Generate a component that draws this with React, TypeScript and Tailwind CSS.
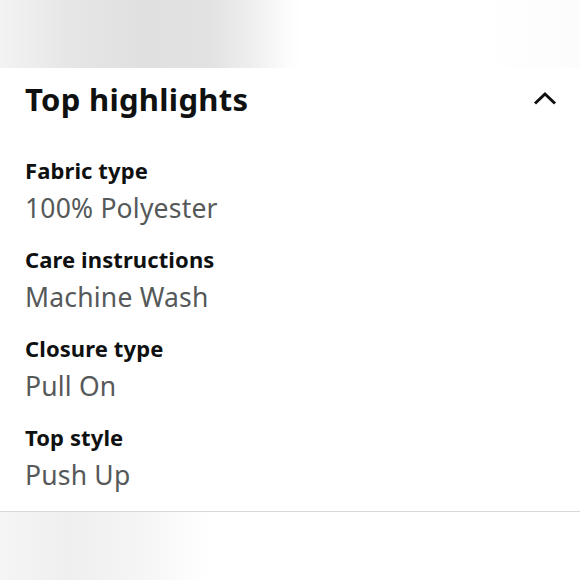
import React from "react";

const items = [
  { label: "Fabric type", value: "100% Polyester" },
  { label: "Care instructions", value: "Machine Wash" },
  { label: "Closure type", value: "Pull On" },
  { label: "Top style", value: "Push Up" },
];

export default function App() {
  return (
    <div
      className="w-[580px] h-[580px] bg-white overflow-hidden flex flex-col"
      style={{ fontFamily: '"Noto Sans", "Open Sans", Arial, sans-serif' }}
    >
      <div className="h-[68px] shrink-0 bg-[linear-gradient(90deg,#f3f3f3_0%,#e6e6e6_12%,#e0e0e0_25%,#e2e2e2_36%,#eeeeee_43%,#fbfbfb_49%,#ffffff_52%,#ffffff_82%,#fcfcfc_100%)]" />
      <div className="px-[25px] pt-[11px] pb-[18px] border-b border-[#d5d9d9]">
        <div className="flex items-center justify-between h-[40px]">
          <h2 className="text-[31px] leading-[40px] font-bold tracking-[0.3px] text-[#0f1111]">Top highlights</h2>
          <svg width="26" height="16" viewBox="0 0 26 16" className="mr-[-3px]">
            <polyline
              points="3,12.5 13,3 23,12.5"
              fill="none"
              stroke="#0f1111"
              strokeWidth="3"
            />
          </svg>
        </div>
        <div className="mt-[37px] flex flex-col gap-[19px]">
          {items.map((it) => (
            <div key={it.label} className="flex flex-col">
              <div className="text-[22px] leading-[28px] font-bold tracking-[0.1px] text-[#0f1111]">{it.label}</div>
              <div className="mt-[6px] text-[26.5px] leading-[36px] tracking-[0.2px] text-[#565959]">{it.value}</div>
            </div>
          ))}
        </div>
      </div>
      <div className="flex-1 bg-[linear-gradient(90deg,#f5f5f5_0%,#efefef_12%,#f5f5f5_24%,#fbfbfb_31%,#ffffff_36%,#ffffff_100%)]" />
    </div>
  );
}
